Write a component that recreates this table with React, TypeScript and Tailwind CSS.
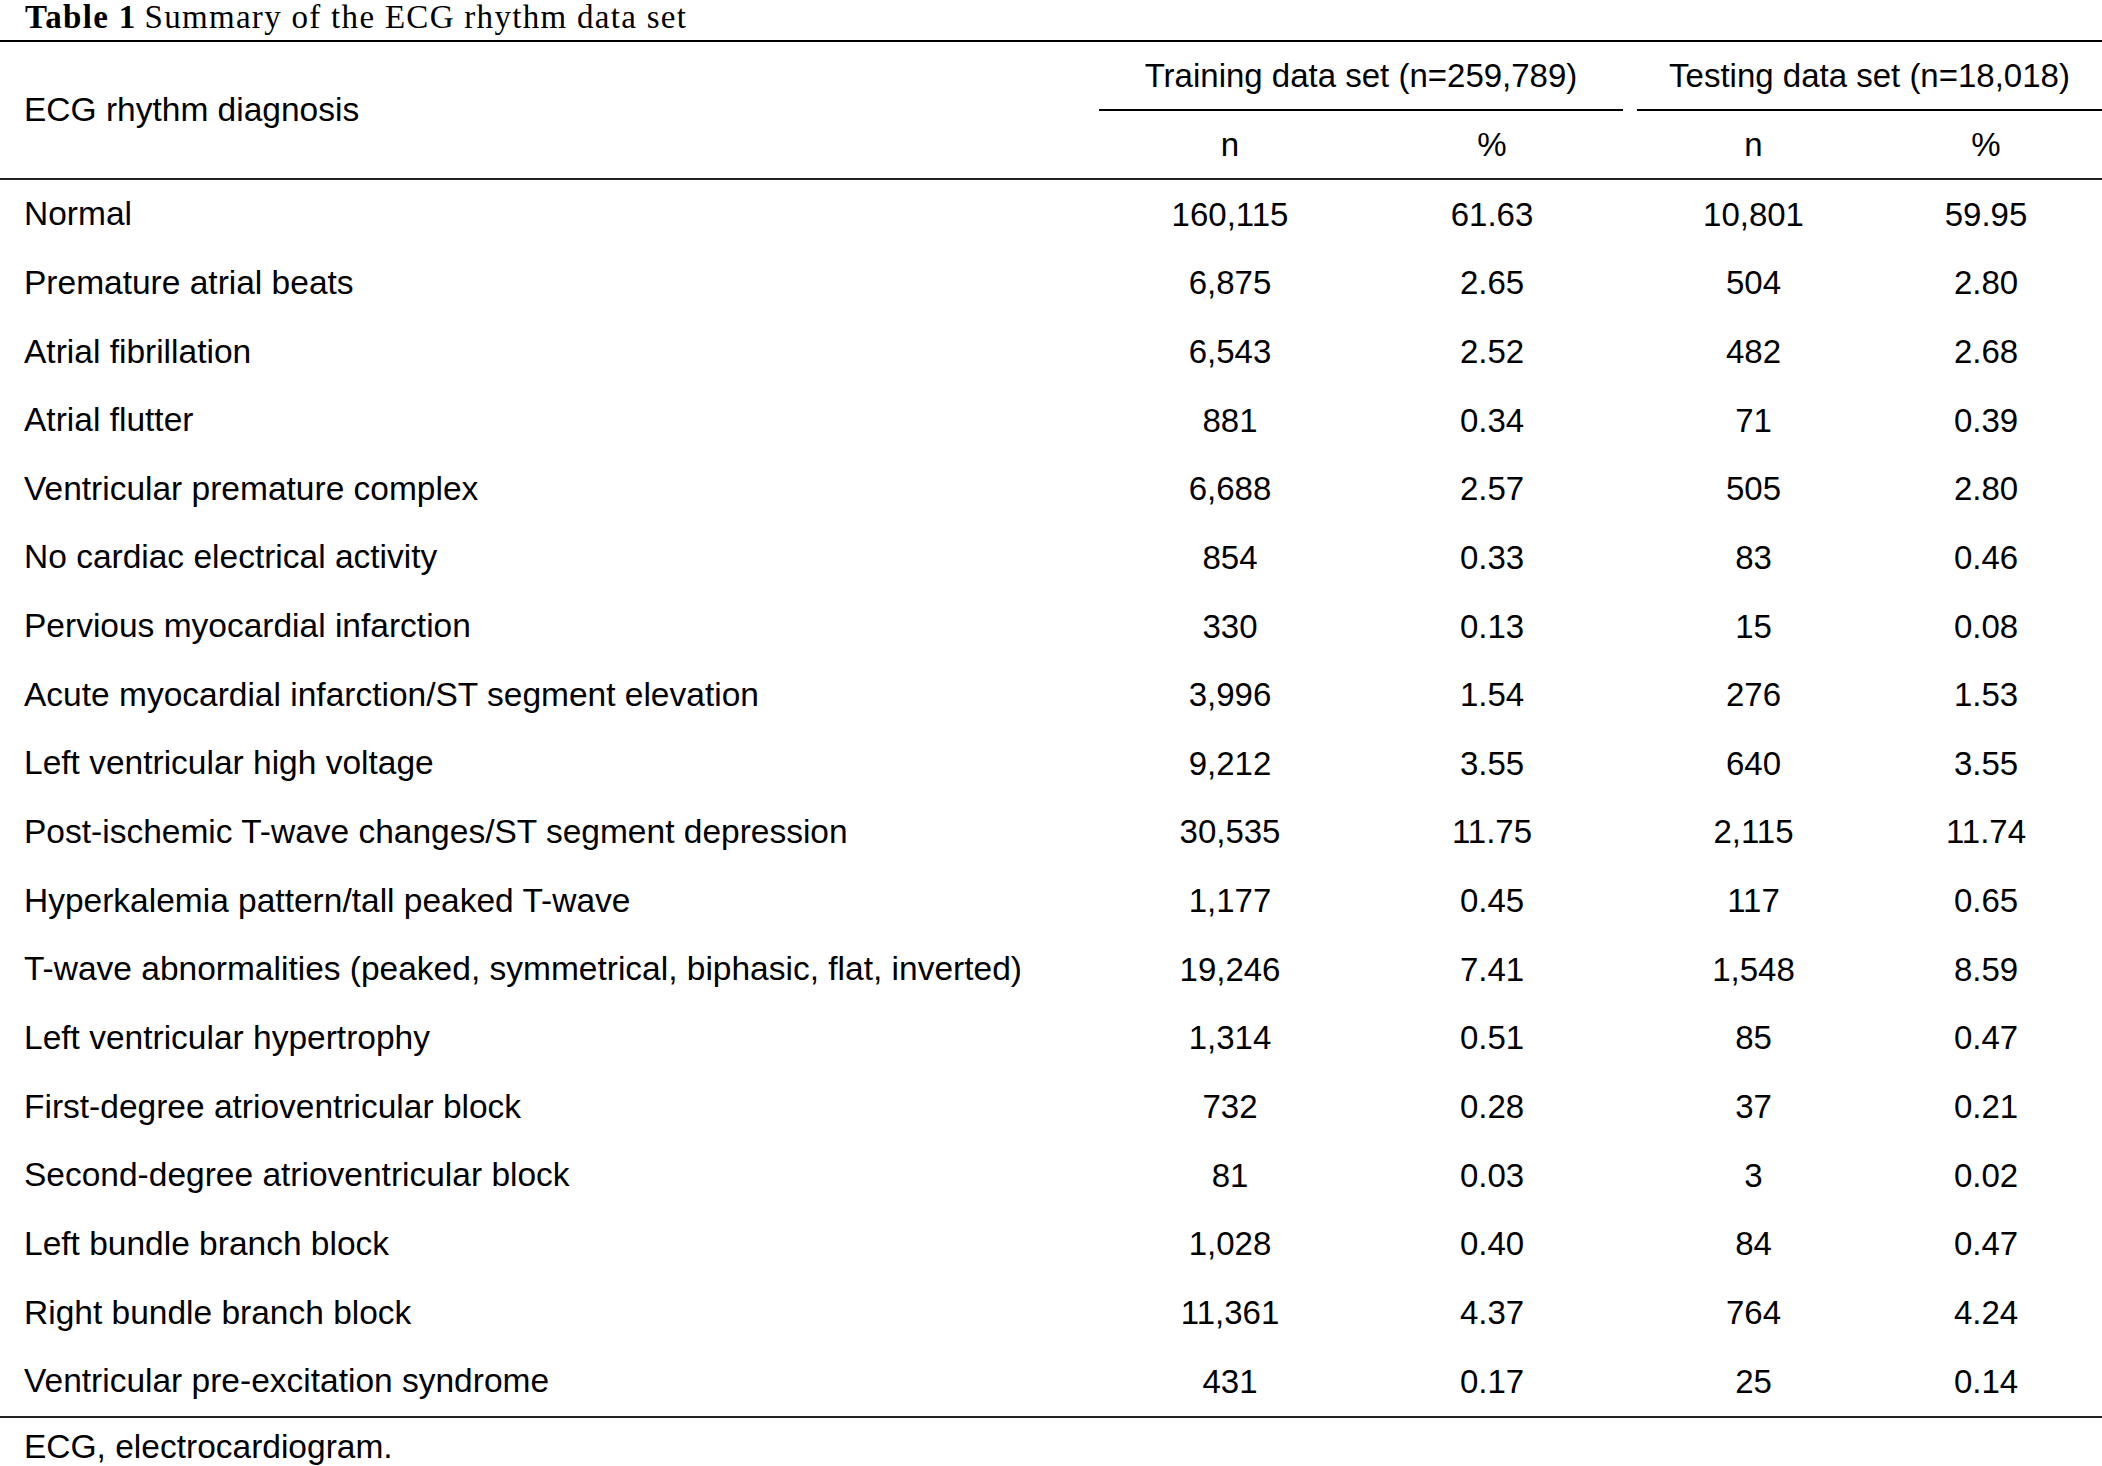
const rows: [string, string, string, string, string][] = [
  ["Normal", "160,115", "61.63", "10,801", "59.95"],
  ["Premature atrial beats", "6,875", "2.65", "504", "2.80"],
  ["Atrial fibrillation", "6,543", "2.52", "482", "2.68"],
  ["Atrial flutter", "881", "0.34", "71", "0.39"],
  ["Ventricular premature complex", "6,688", "2.57", "505", "2.80"],
  ["No cardiac electrical activity", "854", "0.33", "83", "0.46"],
  ["Pervious myocardial infarction", "330", "0.13", "15", "0.08"],
  ["Acute myocardial infarction/ST segment elevation", "3,996", "1.54", "276", "1.53"],
  ["Left ventricular high voltage", "9,212", "3.55", "640", "3.55"],
  ["Post-ischemic T-wave changes/ST segment depression", "30,535", "11.75", "2,115", "11.74"],
  ["Hyperkalemia pattern/tall peaked T-wave", "1,177", "0.45", "117", "0.65"],
  ["T-wave abnormalities (peaked, symmetrical, biphasic, flat, inverted)", "19,246", "7.41", "1,548", "8.59"],
  ["Left ventricular hypertrophy", "1,314", "0.51", "85", "0.47"],
  ["First-degree atrioventricular block", "732", "0.28", "37", "0.21"],
  ["Second-degree atrioventricular block", "81", "0.03", "3", "0.02"],
  ["Left bundle branch block", "1,028", "0.40", "84", "0.47"],
  ["Right bundle branch block", "11,361", "4.37", "764", "4.24"],
  ["Ventricular pre-excitation syndrome", "431", "0.17", "25", "0.14"],
];

const grid = "grid grid-cols-[1099px_262px_262px_247px_232px]";

export default function App() {
  return (
    <div className="w-[2102px] h-[1466px] bg-white text-black overflow-hidden font-['Liberation_Sans',Arial,sans-serif] text-[33px]">
      {/* caption */}
      <div className="h-[40px] pl-[25px] flex items-end pb-[6px] font-['Liberation_Serif','Times_New_Roman',serif] text-[33px] leading-none tracking-[1.3px]">
        <span className="font-bold">Table 1</span>
        <span className="ml-[8px]">Summary of the ECG rhythm data set</span>
      </div>
      <div className="h-[2px] bg-black" />

      {/* header */}
      <div className={grid}>
        <div className="row-span-3 flex items-center pl-[24px] text-[33.5px]">ECG rhythm diagnosis</div>
        <div className="col-span-2 h-[67px] flex items-center justify-center">Training data set (n=259,789)</div>
        <div className="col-span-2 h-[67px] flex items-center justify-center pl-[14px]">Testing data set (n=18,018)</div>
        <div className="col-span-2 h-[2px] bg-black" />
        <div className="col-span-2 h-[2px] ml-[14px] bg-black" />
        <div className="h-[67px] flex items-center justify-center">n</div>
        <div className="h-[67px] flex items-center justify-center">%</div>
        <div className="h-[67px] flex items-center justify-center pl-[14px]">n</div>
        <div className="h-[67px] flex items-center justify-center">%</div>
      </div>
      <div className="h-[2px] bg-[#222]" />

      {/* body */}
      {rows.map((r) => (
        <div key={r[0]} className={`${grid} h-[68.67px] items-center`}>
          <div className="pl-[24px] whitespace-nowrap text-[33.5px]">{r[0]}</div>
          <div className="text-center">{r[1]}</div>
          <div className="text-center">{r[2]}</div>
          <div className="text-center pl-[14px]">{r[3]}</div>
          <div className="text-center">{r[4]}</div>
        </div>
      ))}
      <div className="h-[2px] bg-[#222]" />

      <div className="pl-[24px] pt-[10px] leading-[38px] text-[33.5px]">ECG, electrocardiogram.</div>
    </div>
  );
}
